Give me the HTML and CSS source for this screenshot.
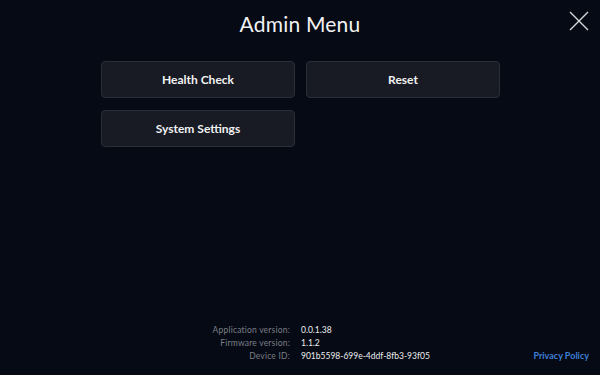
FILE: index.html
```html
<!DOCTYPE html>
<html>
<head>
<meta charset="utf-8">
<link rel="stylesheet" href="styles.css">
</head>
<body>
<div class="page">
  <header class="header">
    <div></div>
    <h1 class="title">Admin Menu</h1>
    <div class="close-wrap">
      <svg class="close" width="20" height="20" viewBox="0 0 20 20">
        <path d="M1 1 L19 19 M19 1 L1 19" stroke="#d6d7da" stroke-width="1.4" fill="none"/>
      </svg>
    </div>
  </header>
  <main class="menu">
    <button class="btn">Health Check</button>
    <button class="btn">Reset</button>
    <button class="btn">System Settings</button>
  </main>
  <footer class="footer">
    <span class="label">Application version:</span><span class="value">0.0.1.38</span><span></span>
    <span class="label">Firmware version:</span><span class="value">1.1.2</span><span></span>
    <span class="label">Device ID:</span><span class="value">901b5598-699e-4ddf-8fb3-93f05</span><a class="privacy">Privacy Policy</a>
  </footer>
</div>
</body>
</html>
```
FILE: styles.css
```css
html, body {
  margin: 0;
  padding: 0;
  background: #060a14;
}
.page {
  width: 600px;
  height: 375px;
  display: flex;
  flex-direction: column;
  font-family: Lato, "Noto Sans", sans-serif;
  color: #f2f2f4;
}
.header {
  display: grid;
  grid-template-columns: 1fr auto 1fr;
  align-items: center;
  height: 44px;
  padding-top: 1px;
}
.title {
  margin: 0;
  font-size: 21px;
  font-weight: 400;
  letter-spacing: 0.2px;
}
.close-wrap {
  display: flex;
  justify-content: flex-end;
  padding-right: 11px;
  margin-top: -5px;
}
.close {
  display: block;
}
.menu {
  flex: 1;
  display: grid;
  grid-template-columns: 194px 194px;
  grid-auto-rows: 37px;
  column-gap: 11px;
  row-gap: 12px;
  align-content: start;
  padding: 16px 0 0 101px;
}
.btn {
  background: #181b23;
  border: 1px solid #2b2e37;
  border-radius: 4px;
  color: #f2f2f4;
  font-family: Lato, "Noto Sans", sans-serif;
  font-size: 12px;
  font-weight: 700;
  padding: 0;
}
.footer {
  display: grid;
  grid-template-columns: 290px 1fr auto;
  column-gap: 11px;
  grid-auto-rows: 13px;
  align-items: center;
  font-size: 8.5px;
  padding: 0 11px 13px 0;
}
.label {
  text-align: right;
  color: #7b7e86;
  letter-spacing: 0.2px;
}
.value {
  color: #eceef0;
}
.privacy {
  color: #3d7fd4;
  font-size: 9px;
  font-weight: 700;
}
```
